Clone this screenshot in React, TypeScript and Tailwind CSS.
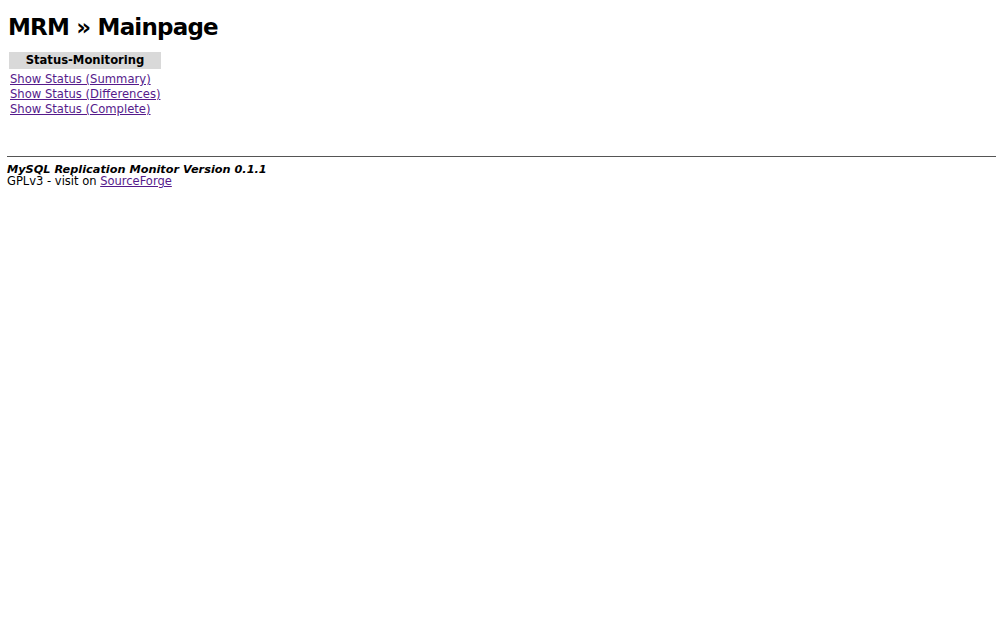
export default function App() {
  const links = [
    'Show Status (Summary)',
    'Show Status (Differences)',
    'Show Status (Complete)',
  ]

  return (
    <div className="min-h-[636px] bg-white px-[7px] pt-[13px] text-black font-['DejaVu_Sans',Verdana,sans-serif]">
      <h1 className="text-[23px] font-bold leading-[28px] tracking-[-0.8px] pl-px">MRM » Mainpage</h1>

      <table className="mt-[11px] ml-[2px] border-separate border-spacing-0">
        <thead>
          <tr>
            <th className="bg-[#d9d9d9] w-[152px] h-[17px] text-[11.6px] font-bold leading-[17px] text-center">
              Status-Monitoring
            </th>
          </tr>
        </thead>
        <tbody>
          <tr>
            <td className="h-[3px]" />
          </tr>
          {links.map((label) => (
            <tr key={label}>
              <td className="pl-px text-[11.6px] leading-[15px] whitespace-nowrap">
                <a href="#" className="text-[#551a8b] underline">{label}</a>
              </td>
            </tr>
          ))}
        </tbody>
      </table>

      <div className="mt-[39px] h-px bg-[#555] w-[989px]" />

      <div className="mt-[7px] text-[11.3px] font-bold italic leading-[11px]">
        MySQL Replication Monitor Version 0.1.1
      </div>
      <div className="text-[11.5px] leading-[12px]">
        GPLv3 - visit on <a href="#" className="text-[#551a8b] underline">SourceForge</a>
      </div>
    </div>
  )
}
